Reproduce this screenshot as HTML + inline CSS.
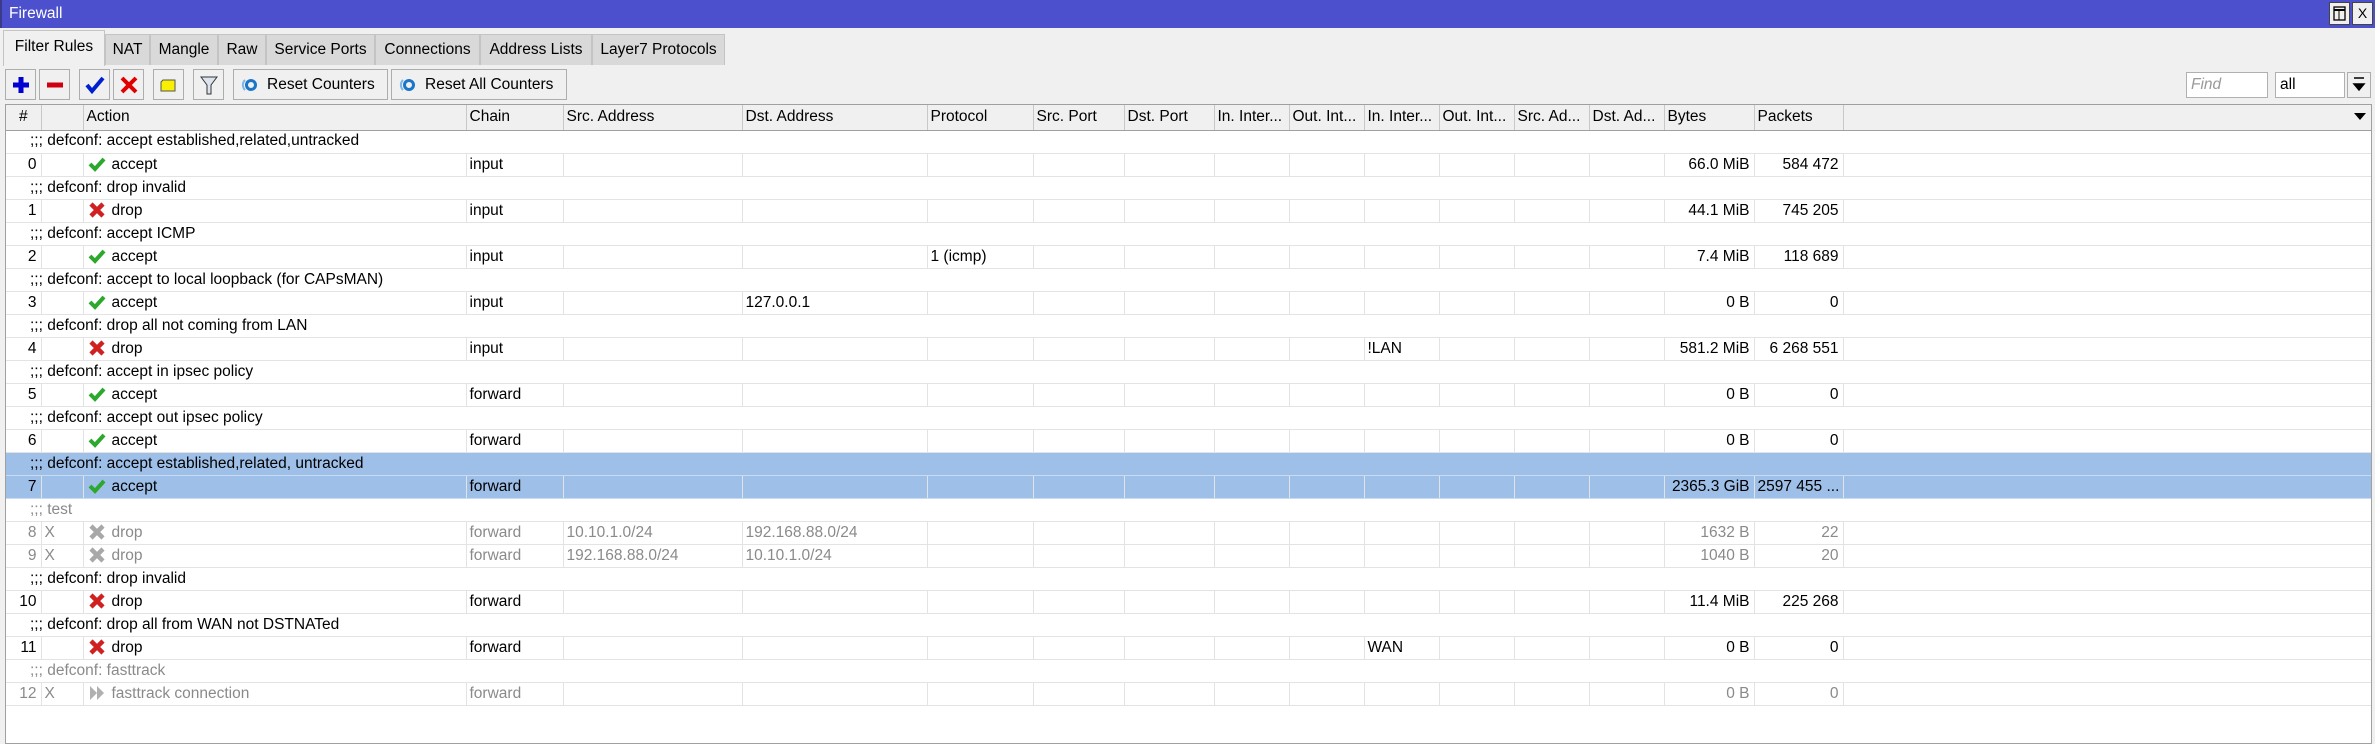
<!DOCTYPE html>
<html><head><meta charset="utf-8"><style>
*{box-sizing:border-box;margin:0;padding:0}
body{width:2375px;height:740px;overflow:hidden;background:#f0f0f0;font-family:"Liberation Sans",Arial,sans-serif;font-size:15.5px;color:#000;position:relative}
.abs{position:absolute}
#title{left:0;top:0;width:2375px;height:28px;background:#4d50cc;color:#fff;padding:5px 0 0 7px;font-size:15.5px;border-left:2px solid #3a3a8a}
.tb{position:absolute;top:2px;width:21px;height:23px;background:#f0f0f0;border:1px solid #444;color:#000;font-size:14px;text-align:center;line-height:21px}
.tab{position:absolute;top:34px;height:31px;background:#d9d9d9;border:1px solid #c4c4c4;border-bottom:none;text-align:center;line-height:30px}
.tab.act{top:30px;height:36px;background:#f0f0f0;line-height:32px}
.btn{position:absolute;top:69px;height:31px;background:#f0f0f0;border:1px solid #adadad}
.btn svg{position:absolute;left:0;top:0}
.rbtn{line-height:29px;padding-left:33px}
.rbtn svg{left:7px;top:8px}
#grid{left:5px;top:104px;width:2367px;height:640px;background:#fff;border:1px solid #a0a0a0}
table{border-collapse:collapse;table-layout:fixed;position:absolute;left:0;top:0;width:2365px}
td,th{height:23px;border-bottom:1px solid #e3e3e3;border-right:1px solid #e3e3e3;white-space:nowrap;overflow:hidden;padding:0 3px;font-weight:normal;text-align:left}
th{height:25px;background:#f0f0f0;border-right:1px solid #c8c8c8;border-bottom:1px solid #a0a0a0}
tr.c td{border-right:none;padding-left:24px}
.r{text-align:right;padding-right:4px}
.d td{color:#8a8a8a}
.sel td{background:#9dbfe8;border-bottom-color:#c8dbf2}
.ic{display:inline-block;width:18px;height:16px;vertical-align:-3px;margin:0 6px 0 1px}
</style></head><body>
<div id="title" class="abs">Firewall</div>
<div class="tb" style="left:2329px"><svg width="19" height="21"><rect x="4" y="4" width="11" height="13" fill="none" stroke="#000" stroke-width="1.3"/><line x1="4" y1="7" x2="15" y2="7" stroke="#000" stroke-width="2"/><line x1="9" y1="7" x2="9" y2="17" stroke="#000"/></svg></div>
<div class="tb" style="left:2352px">X</div>

<div class="tab" style="left:105px;width:45px">NAT</div>
<div class="tab" style="left:150px;width:68px">Mangle</div>
<div class="tab" style="left:218px;width:48px">Raw</div>
<div class="tab" style="left:266px;width:109px">Service Ports</div>
<div class="tab" style="left:375px;width:105px">Connections</div>
<div class="tab" style="left:480px;width:112px">Address Lists</div>
<div class="tab" style="left:592px;width:133px">Layer7 Protocols</div>
<div class="tab act" style="left:3px;width:102px">Filter Rules</div>

<div class="btn" style="left:5px;width:31px"><svg width="30" height="30"><path d="M15 7v16M7 15h16" stroke="#0000d0" stroke-width="5"/></svg></div>
<div class="btn" style="left:39px;width:31px"><svg width="30" height="30"><path d="M7 15h16" stroke="#d00010" stroke-width="5"/></svg></div>
<div class="btn" style="left:79px;width:31px"><svg width="30" height="30"><path d="M7 15l5 6 11-13" stroke="#0020d0" stroke-width="4" fill="none"/></svg></div>
<div class="btn" style="left:113px;width:31px"><svg width="30" height="30"><path d="M8 8l14 14M22 8L8 22" stroke="#e00000" stroke-width="4"/></svg></div>
<div class="btn" style="left:153px;width:31px"><svg width="30" height="30"><path d="M9 10h12v11H7v-9z" fill="#f8f000" stroke="#555"/></svg></div>
<div class="btn" style="left:193px;width:31px"><svg width="30" height="30"><path d="M7 7h16l-6 8v9h-4v-9z" fill="#dde4f0" stroke="#333"/></svg></div>
<div class="btn rbtn" style="left:233px;width:155px"><svg width="18" height="14"><circle cx="10" cy="7" r="4.5" fill="none" stroke="#1a76c8" stroke-width="3"/><path d="M4 2a7 7 0 0 0 0 10" stroke="#7bb6e8" stroke-width="2" fill="none"/></svg>Reset Counters</div>
<div class="btn rbtn" style="left:391px;width:176px"><svg width="18" height="14"><circle cx="10" cy="7" r="4.5" fill="none" stroke="#1a76c8" stroke-width="3"/><path d="M4 2a7 7 0 0 0 0 10" stroke="#7bb6e8" stroke-width="2" fill="none"/></svg>Reset All Counters</div>

<div class="abs" style="left:2186px;top:72px;width:82px;height:26px;background:#fff;border:1px solid #b0b0b0;color:#999;font-style:italic;padding:3px 4px">Find</div>
<div class="abs" style="left:2275px;top:72px;width:70px;height:26px;background:#fff;border:1px solid #b0b0b0;padding:3px 4px">all</div>
<div class="abs" style="left:2347px;top:72px;width:24px;height:26px;background:#f0f0f0;border:1px solid #adadad"><svg width="22" height="24"><path d="M6 5h10M6 11h10l-5 6z" stroke="#000" fill="#000" stroke-width="1.5"/></svg></div>

<div id="grid" class="abs">
<table>
<colgroup><col style="width:35px"><col style="width:42px"><col style="width:383px"><col style="width:97px"><col style="width:179px"><col style="width:185px"><col style="width:106px"><col style="width:91px"><col style="width:90px"><col style="width:75px"><col style="width:75px"><col style="width:75px"><col style="width:75px"><col style="width:75px"><col style="width:75px"><col style="width:90px"><col style="width:89px"><col style="width:528px"></colgroup>
<tr><th style="text-align:center">#</th><th></th><th>Action</th><th>Chain</th><th>Src. Address</th><th>Dst. Address</th><th>Protocol</th><th>Src. Port</th><th>Dst. Port</th><th>In. Inter...</th><th>Out. Int...</th><th>In. Inter...</th><th>Out. Int...</th><th>Src. Ad...</th><th>Dst. Ad...</th><th>Bytes</th><th>Packets</th><th style="text-align:right;padding-right:4px;border-right:none"><svg width="14" height="10"><path d="M1 2h12l-6 7z" fill="#000"/></svg></th></tr>
</table>
<svg width="0" height="0" style="position:absolute"><defs>
<symbol id="ok" viewBox="0 0 18 16"><path d="M2 8l5 5 9-10" stroke="#2ca82c" stroke-width="4" fill="none"/></symbol>
<symbol id="no" viewBox="0 0 18 16"><path d="M3 2l12 12M15 2L3 14" stroke="#d02020" stroke-width="4.5"/></symbol>
<symbol id="nog" viewBox="0 0 18 16"><path d="M3 2l12 12M15 2L3 14" stroke="#a8a8a8" stroke-width="4.5"/></symbol>
<symbol id="ft" viewBox="0 0 18 16"><path d="M2 1l7 7-7 7zM9 1l7 7-7 7z" fill="#b0b0b0"/></symbol>
</defs></svg>
<table style="top:25px">
<colgroup><col style="width:35px"><col style="width:42px"><col style="width:383px"><col style="width:97px"><col style="width:179px"><col style="width:185px"><col style="width:106px"><col style="width:91px"><col style="width:90px"><col style="width:75px"><col style="width:75px"><col style="width:75px"><col style="width:75px"><col style="width:75px"><col style="width:75px"><col style="width:90px"><col style="width:89px"><col style="width:528px"></colgroup>
<tr class="c"><td colspan="18">;;; defconf: accept established,related,untracked</td></tr>
<tr><td class="r">0</td><td></td><td><svg class="ic"><use href="#ok"/></svg>accept</td><td>input</td><td></td><td></td><td></td><td></td><td></td><td></td><td></td><td></td><td></td><td></td><td></td><td class="r">66.0 MiB</td><td class="r">584 472</td><td style="border-right:none"></td></tr>
<tr class="c"><td colspan="18">;;; defconf: drop invalid</td></tr>
<tr><td class="r">1</td><td></td><td><svg class="ic"><use href="#no"/></svg>drop</td><td>input</td><td></td><td></td><td></td><td></td><td></td><td></td><td></td><td></td><td></td><td></td><td></td><td class="r">44.1 MiB</td><td class="r">745 205</td><td style="border-right:none"></td></tr>
<tr class="c"><td colspan="18">;;; defconf: accept ICMP</td></tr>
<tr><td class="r">2</td><td></td><td><svg class="ic"><use href="#ok"/></svg>accept</td><td>input</td><td></td><td></td><td>1 (icmp)</td><td></td><td></td><td></td><td></td><td></td><td></td><td></td><td></td><td class="r">7.4 MiB</td><td class="r">118 689</td><td style="border-right:none"></td></tr>
<tr class="c"><td colspan="18">;;; defconf: accept to local loopback (for CAPsMAN)</td></tr>
<tr><td class="r">3</td><td></td><td><svg class="ic"><use href="#ok"/></svg>accept</td><td>input</td><td></td><td>127.0.0.1</td><td></td><td></td><td></td><td></td><td></td><td></td><td></td><td></td><td></td><td class="r">0 B</td><td class="r">0</td><td style="border-right:none"></td></tr>
<tr class="c"><td colspan="18">;;; defconf: drop all not coming from LAN</td></tr>
<tr><td class="r">4</td><td></td><td><svg class="ic"><use href="#no"/></svg>drop</td><td>input</td><td></td><td></td><td></td><td></td><td></td><td></td><td></td><td>!LAN</td><td></td><td></td><td></td><td class="r">581.2 MiB</td><td class="r">6 268 551</td><td style="border-right:none"></td></tr>
<tr class="c"><td colspan="18">;;; defconf: accept in ipsec policy</td></tr>
<tr><td class="r">5</td><td></td><td><svg class="ic"><use href="#ok"/></svg>accept</td><td>forward</td><td></td><td></td><td></td><td></td><td></td><td></td><td></td><td></td><td></td><td></td><td></td><td class="r">0 B</td><td class="r">0</td><td style="border-right:none"></td></tr>
<tr class="c"><td colspan="18">;;; defconf: accept out ipsec policy</td></tr>
<tr><td class="r">6</td><td></td><td><svg class="ic"><use href="#ok"/></svg>accept</td><td>forward</td><td></td><td></td><td></td><td></td><td></td><td></td><td></td><td></td><td></td><td></td><td></td><td class="r">0 B</td><td class="r">0</td><td style="border-right:none"></td></tr>
<tr class="c sel"><td colspan="18">;;; defconf: accept established,related, untracked</td></tr>
<tr class="sel"><td class="r">7</td><td></td><td><svg class="ic"><use href="#ok"/></svg>accept</td><td>forward</td><td></td><td></td><td></td><td></td><td></td><td></td><td></td><td></td><td></td><td></td><td></td><td class="r">2365.3 GiB</td><td class="r">2597 455 ...</td><td style="border-right:none"></td></tr>
<tr class="c d"><td colspan="18">;;; test</td></tr>
<tr class="d"><td class="r">8</td><td>X</td><td><svg class="ic"><use href="#nog"/></svg>drop</td><td>forward</td><td>10.10.1.0/24</td><td>192.168.88.0/24</td><td></td><td></td><td></td><td></td><td></td><td></td><td></td><td></td><td></td><td class="r">1632 B</td><td class="r">22</td><td style="border-right:none"></td></tr>
<tr class="d"><td class="r">9</td><td>X</td><td><svg class="ic"><use href="#nog"/></svg>drop</td><td>forward</td><td>192.168.88.0/24</td><td>10.10.1.0/24</td><td></td><td></td><td></td><td></td><td></td><td></td><td></td><td></td><td></td><td class="r">1040 B</td><td class="r">20</td><td style="border-right:none"></td></tr>
<tr class="c"><td colspan="18">;;; defconf: drop invalid</td></tr>
<tr><td class="r">10</td><td></td><td><svg class="ic"><use href="#no"/></svg>drop</td><td>forward</td><td></td><td></td><td></td><td></td><td></td><td></td><td></td><td></td><td></td><td></td><td></td><td class="r">11.4 MiB</td><td class="r">225 268</td><td style="border-right:none"></td></tr>
<tr class="c"><td colspan="18">;;; defconf: drop all from WAN not DSTNATed</td></tr>
<tr><td class="r">11</td><td></td><td><svg class="ic"><use href="#no"/></svg>drop</td><td>forward</td><td></td><td></td><td></td><td></td><td></td><td></td><td></td><td>WAN</td><td></td><td></td><td></td><td class="r">0 B</td><td class="r">0</td><td style="border-right:none"></td></tr>
<tr class="c d"><td colspan="18">;;; defconf: fasttrack</td></tr>
<tr class="d"><td class="r">12</td><td>X</td><td><svg class="ic"><use href="#ft"/></svg>fasttrack connection</td><td>forward</td><td></td><td></td><td></td><td></td><td></td><td></td><td></td><td></td><td></td><td></td><td></td><td class="r">0 B</td><td class="r">0</td><td style="border-right:none"></td></tr>
</table>
</div>
</body></html>
